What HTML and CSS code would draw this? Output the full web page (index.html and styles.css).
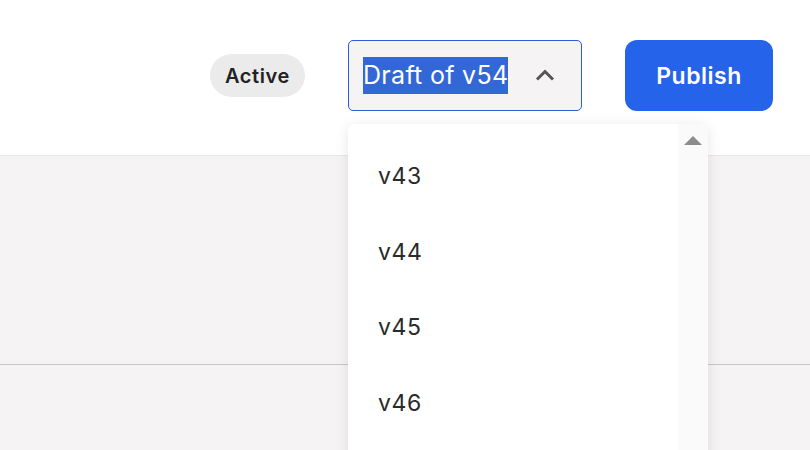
FILE: index.html
```html
<!DOCTYPE html>
<html>
<head>
<meta charset="utf-8">
<link rel="stylesheet" href="styles.css">
</head>
<body>
<header class="topbar">
  <span class="badge">Active</span>
  <div class="select">
    <span class="select-value">Draft of v54</span>
    <svg class="chevron" width="20" height="12" viewBox="0 0 20 12"><path d="M2 10.5 L10 2.5 L18 10.5" fill="none" stroke="#555" stroke-width="3"/></svg>
  </div>
  <button class="publish">Publish</button>
</header>
<main class="content">
  <div class="panel"></div>
</main>
<div class="dropdown">
  <ul class="options">
    <li>v43</li>
    <li>v44</li>
    <li>v45</li>
    <li>v46</li>
  </ul>
  <div class="scrollbar">
    <svg class="scroll-arrow" width="18" height="9" viewBox="0 0 18 9"><path d="M9 0 L18 9 L0 9 Z" fill="#8c8c8c"/></svg>
  </div>
</div>
</body>
</html>
```

FILE: styles.css
```css
* { box-sizing: border-box; }
html, body { margin: 0; padding: 0; }
body {
  width: 810px;
  height: 450px;
  overflow: hidden;
  font-family: Inter, "Noto Sans", sans-serif;
  background: #f5f3f4;
  position: relative;
}
.topbar {
  height: 156px;
  background: #ffffff;
  border-bottom: 1px solid #e8e6e7;
  display: flex;
  justify-content: flex-end;
  align-items: flex-start;
  padding: 40px 37px 0 0;
  gap: 43px;
}
.badge {
  margin-top: 14px;
  height: 43px;
  padding: 0 15px;
  border-radius: 22px;
  background: #ebebeb;
  color: #222;
  font-weight: 600;
  font-size: 20px;
  letter-spacing: 0.6px;
  display: flex;
  align-items: center;
}
.select {
  width: 234px;
  height: 71px;
  border: 1px solid #2b5ed8;
  border-radius: 5px;
  background: #f5f3f4;
  display: flex;
  align-items: center;
  padding-left: 14px;
  padding-right: 26px;
}
.select-value {
  background: #3367d6;
  color: #fff;
  font-size: 25px;
  letter-spacing: 0.3px;
  height: 37px;
  line-height: 37px;
  display: inline-block;
}
.chevron {
  margin-left: auto;
  margin-top: -2px;
}
.publish {
  width: 148px;
  height: 71px;
  border: none;
  border-radius: 12px;
  background: #2563eb;
  color: #fff;
  font-family: Inter, "Noto Sans", sans-serif;
  font-weight: 600;
  font-size: 23px;
  letter-spacing: 0.5px;
  padding: 0;
}
.content { padding: 0; }
.panel {
  height: 209px;
  border-bottom: 1px solid #c8c6c7;
}
.dropdown {
  position: absolute;
  left: 348px;
  top: 124px;
  width: 360px;
  height: 340px;
  background: #fff;
  border-radius: 6px 6px 0 0;
  box-shadow: 0 2px 14px rgba(0,0,0,0.10);
  display: flex;
  overflow: hidden;
}
.options {
  list-style: none;
  margin: 0;
  padding: 15px 0 0 0;
  flex: 1;
}
.options li {
  height: 75.5px;
  line-height: 75.5px;
  padding-left: 30px;
  font-size: 23px;
  letter-spacing: 0.6px;
  color: #2a2a2a;
}
.scrollbar {
  width: 30px;
  background: #fafafa;
  display: flex;
  justify-content: center;
  padding-top: 12px;
}
.scroll-arrow { display: block; }
```
